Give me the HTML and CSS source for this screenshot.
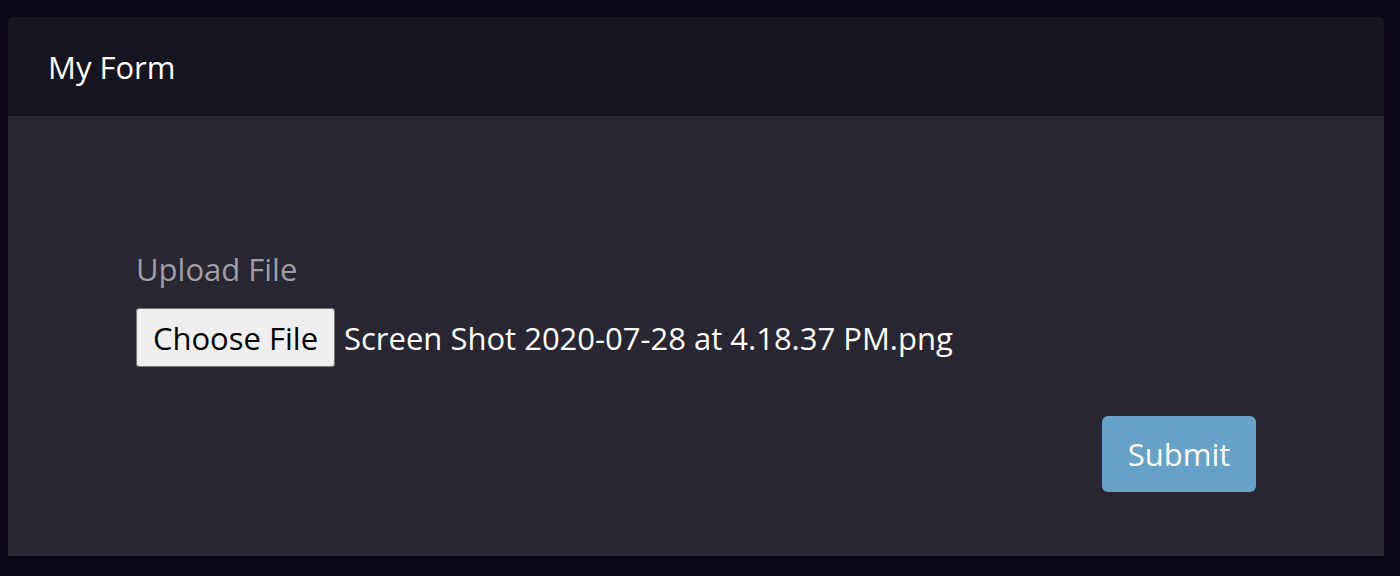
FILE: index.html
```html
<!DOCTYPE html>
<html>
<head>
<meta charset="utf-8">
<link rel="stylesheet" href="styles.css">
</head>
<body>
<div class="card">
  <div class="card-header">My Form</div>
  <div class="card-body">
    <form class="form">
      <label class="label">Upload File</label>
      <div class="file-row">
        <button type="button" class="choose">Choose File</button>
        <span class="file-name">Screen Shot 2020-07-28 at 4.18.37 PM.png</span>
      </div>
      <div class="actions">
        <button type="button" class="submit">Submit</button>
      </div>
    </form>
  </div>
</div>
</body>
</html>
```
FILE: styles.css
```css
html, body {
  margin: 0;
  padding: 0;
  background: #0a0514;
  height: 576px;
  overflow: hidden;
}
body {
  padding: 17px 16px 0 8px;
  font-family: "Open Sans", "Noto Sans", sans-serif;
}
.card {
  background: #282630;
  border-radius: 6px 6px 0 0;
  height: 539px;
  overflow: hidden;
}
.card-header {
  background: #16141f;
  height: 99px;
  box-sizing: border-box;
  padding-left: 40px;
  display: flex;
  align-items: center;
  color: #ffffff;
  font-size: 31px;
}
.card-body {
  padding: 136px 128px 0 128px;
}
.form {
  display: flex;
  flex-direction: column;
}
.label {
  color: #9e9ea4;
  font-size: 31px;
  line-height: 34px;
}
.file-row {
  display: flex;
  align-items: center;
  margin-top: 22px;
}
.choose {
  font-family: inherit;
  font-size: 31px;
  color: #000;
  background: #efefef;
  border: 1px solid #767676;
  border-radius: 3px;
  height: 59px;
  width: 199px;
  padding: 0;
}
.file-name {
  color: #ffffff;
  font-size: 31px;
  margin-left: 9px;
}
.actions {
  display: flex;
  justify-content: flex-end;
  margin-top: 49px;
}
.submit {
  font-family: inherit;
  font-size: 31px;
  color: #ffffff;
  background: #67a1c7;
  border: none;
  border-radius: 6px;
  width: 154px;
  height: 76px;
}
```
